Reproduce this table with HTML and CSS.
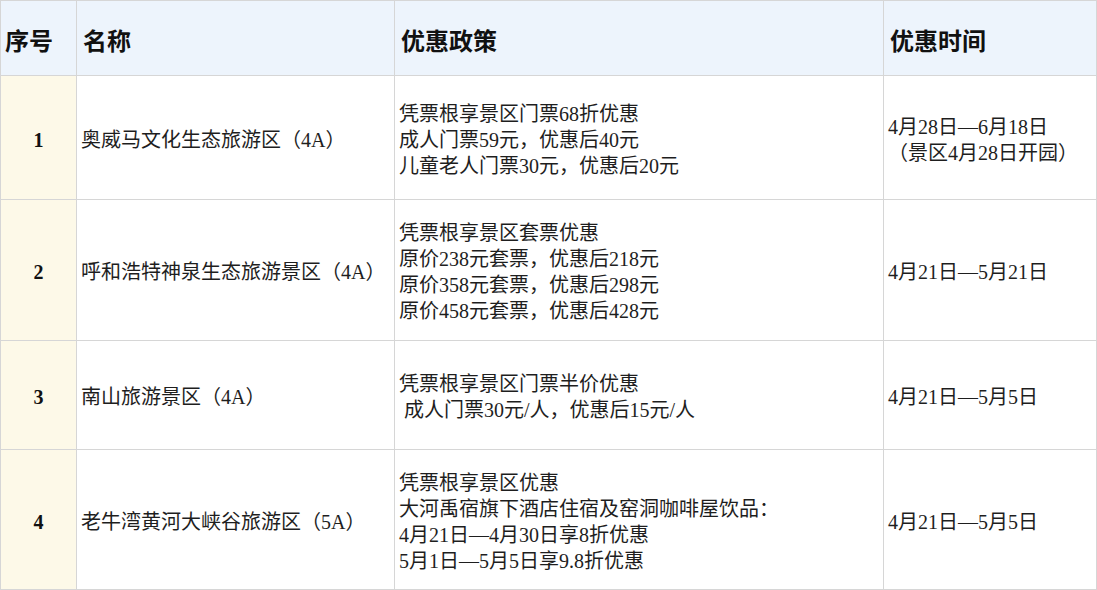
FILE: index.html
```html
<!DOCTYPE html>
<html lang="zh-CN">
<head>
<meta charset="utf-8">
<title>优惠政策</title>
<link rel="stylesheet" href="styles.css">
</head>
<body>
<table class="grid">
  <colgroup>
    <col class="c-no">
    <col class="c-name">
    <col class="c-policy">
    <col class="c-time">
  </colgroup>
  <thead>
    <tr class="head">
      <th class="no-h">序号</th>
      <th>名称</th>
      <th>优惠政策</th>
      <th>优惠时间</th>
    </tr>
  </thead>
  <tbody>
    <tr class="r1">
      <td class="no">1</td>
      <td>奥威马文化生态旅游区（4A）</td>
      <td>凭票根享景区门票68折优惠<br>成人门票59元，优惠后40元<br>儿童老人门票30元，优惠后20元</td>
      <td>4月28日—6月18日<br>（景区4月28日开园）</td>
    </tr>
    <tr class="r2">
      <td class="no">2</td>
      <td>呼和浩特神泉生态旅游景区（4A）</td>
      <td>凭票根享景区套票优惠<br>原价238元套票，优惠后218元<br>原价358元套票，优惠后298元<br>原价458元套票，优惠后428元</td>
      <td>4月21日—5月21日</td>
    </tr>
    <tr class="r3">
      <td class="no">3</td>
      <td>南山旅游景区（4A）</td>
      <td>凭票根享景区门票半价优惠<br>&nbsp;成人门票30元/人，优惠后15元/人</td>
      <td>4月21日—5月5日</td>
    </tr>
    <tr class="r4">
      <td class="no">4</td>
      <td>老牛湾黄河大峡谷旅游区（5A）</td>
      <td>凭票根享景区优惠<br>大河禹宿旗下酒店住宿及窑洞咖啡屋饮品：<br>4月21日—4月30日享8折优惠<br>5月1日—5月5日享9.8折优惠</td>
      <td>4月21日—5月5日</td>
    </tr>
  </tbody>
</table>
</body>
</html>
```
FILE: styles.css
```css
html, body {
  margin: 0;
  padding: 0;
  background: #ffffff;
}
.grid {
  border-collapse: collapse;
  table-layout: fixed;
  width: 1096px;
  font-family: "Liberation Serif", "Noto Sans CJK SC", serif;
  color: #1e1e1e;
}
.c-no { width: 76px; }
.c-name { width: 318px; }
.c-policy { width: 489px; }
.c-time { width: 213px; }
.grid th,
.grid td {
  border: 1px solid #d6d6d6;
  padding: 0 4px;
  text-align: left;
  vertical-align: middle;
}
.grid th {
  background: #edf4fc;
  font-size: 24px;
  font-weight: bold;
  color: #111;
  height: 72px;
  padding-left: 6px;
  padding-top: 2px;
}
.grid th.no-h {
  padding-left: 4px;
}
.grid td {
  font-size: 20px;
  line-height: 26px;
  padding-top: 4px;
}
.grid td.no {
  background: #fdf9e8;
  text-align: center;
  font-weight: bold;
  font-size: 20px;
  color: #111;
}
.r1 td { height: 119px; }
.r2 td { height: 136px; }
.r3 td { height: 104px; }
.r4 td { height: 135px; }
```
